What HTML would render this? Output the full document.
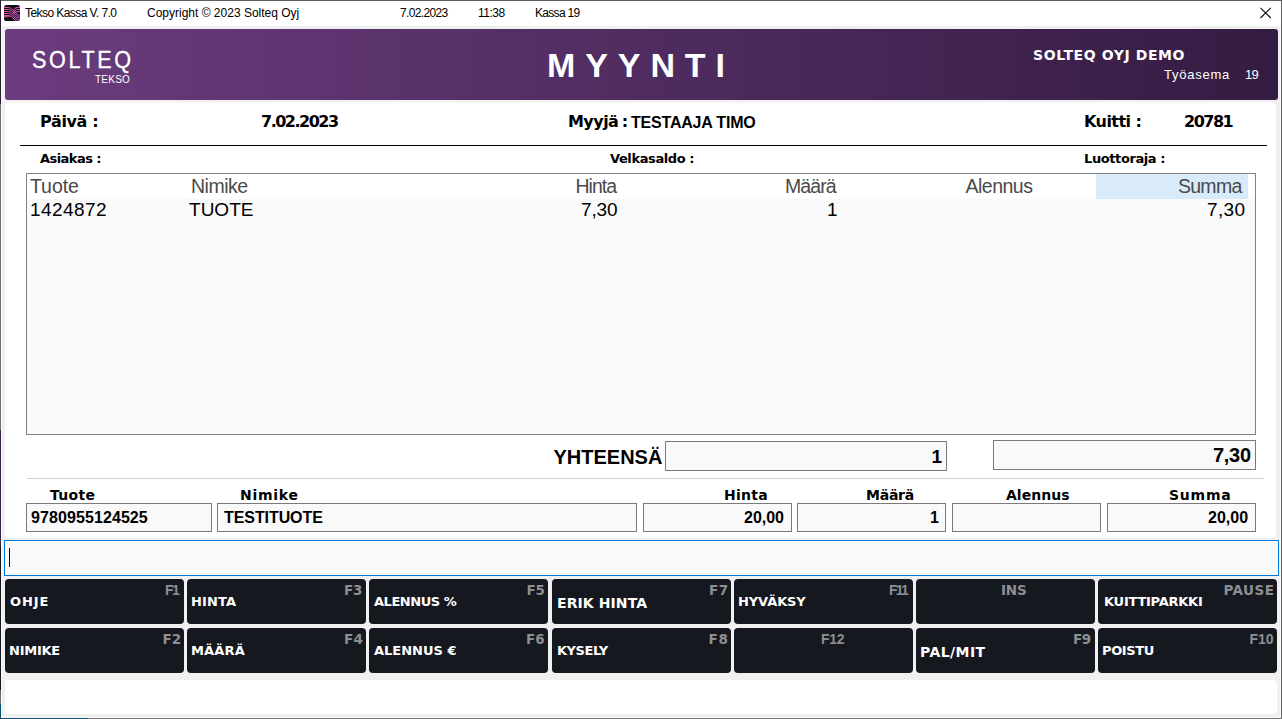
<!DOCTYPE html>
<html lang="fi">
<head>
<meta charset="utf-8">
<title>Tekso Kassa V. 7.0</title>
<style>
html,body{margin:0;padding:0;}
body{width:1282px;height:719px;overflow:hidden;background:#f0f0f0;position:relative;font-family:"Liberation Sans",sans-serif;color:#000;}
.abs,.t{position:absolute;white-space:nowrap;}
.t{line-height:1;}
/* window chrome */
#frame-top{left:0;top:0;width:1282px;height:1px;background:#5f5f5f;}
#frame-right{left:1281px;top:0;width:1px;height:719px;background:#606060;}
#frame-right2{left:1280px;top:26px;width:1px;height:692px;background:#fafafa;}
#frame-left2{left:1px;top:26px;width:1px;height:692px;background:#fafafa;}
#frame-bot{left:0;top:718px;width:1282px;height:1px;background:#747474;}
#frame-bot2{left:1px;top:717px;width:1280px;height:1px;background:#fafafa;}
#frame-botl{left:0;top:718px;width:88px;height:1px;background:#0d4f6e;}
#frame-left{left:0;top:0;width:1px;height:719px;background:linear-gradient(180deg,#2a1c33 0,#2a1c33 104px,#6c6c6c 104px,#6c6c6c 430px,#3a2547 430px,#3a2547 546px,#14141a 546px,#14141a 690px,#6c6c6c 690px,#6c6c6c 704px,#0d4f6e 704px);}
#titlebar{left:1px;top:1px;width:1280px;height:25px;background:#fff;}
.tb{font-size:12px;top:7px;color:#000;}
/* banner */
#banner{left:5px;top:29px;width:1273px;height:71px;border-radius:3px;background:linear-gradient(90deg,#6b3c7e,#341c42);}
.w{color:#fff;}
/* main white panel */
#panel{left:5px;top:103px;width:1271px;height:435px;background:#fff;border-radius:4px;box-shadow:0 -1px 0 rgba(255,255,255,.45);}
.mb{font-family:"DejaVu Sans","Liberation Sans",sans-serif;font-weight:bold;}
.ab{font-family:"Liberation Sans",sans-serif;font-weight:bold;}
#hr1{left:20px;top:145px;width:1247px;height:1px;background:#000;}
#hr2{left:27px;top:478px;width:1237px;height:1px;background:#d0d0d0;}
#grid{left:26px;top:173px;width:1228px;height:260px;border:1px solid #7d8188;background:#f9f9f9;}
#gridhead{left:27px;top:174px;width:1228px;height:25px;background:#fff;}
#sumhl{left:1096px;top:174px;width:152px;height:25px;background:#d9ebf9;}
.gh{font-size:19.5px;color:#4a4a4a;top:178px;}
.gr{font-size:19px;color:#000;top:200px;}
.box{position:absolute;border:1px solid #7a7a7a;background:#f9f9f9;box-sizing:border-box;}
.lbl{font-size:14px;top:488px;letter-spacing:.5px;}
.val{font-size:16px;top:510px;font-weight:bold;}
#entry{left:4px;top:540px;width:1275px;height:36px;box-sizing:border-box;border:1px solid #0078d7;background:#fafafa;}
#caret{left:9px;top:548px;width:1px;height:19px;background:#000;}
.btn{position:absolute;width:179px;height:45px;border-radius:4px;background:#16181f;}
.bl{font-size:13px;color:#fff;}
.fk{font-family:"DejaVu Sans","Liberation Sans",sans-serif;font-weight:bold;font-size:13.5px;color:#8c8e93;}
#bottom{left:5px;top:680px;width:1272px;height:34px;background:#fff;border-radius:4px;}
</style>
</head>
<body>
<div class="abs" id="titlebar"></div>
<div class="abs" id="frame-top"></div>
<div class="abs" id="frame-left"></div>
<div class="abs" id="frame-left2"></div>
<div class="abs" id="frame-right2"></div>
<div class="abs" id="frame-right"></div>
<div class="abs" id="frame-bot2"></div>
<div class="abs" id="frame-bot"></div>
<div class="abs" id="frame-botl"></div>
<svg class="abs" id="appicon" style="left:4px;top:5px" width="16" height="16" viewBox="0 0 16 16"><defs><linearGradient id="ig" x1="0" y1="0" x2="1" y2="0"><stop offset="0" stop-color="#f0509f"/><stop offset=".5" stop-color="#e860cc"/><stop offset="1" stop-color="#d868f8"/></linearGradient><clipPath id="ic"><rect x="0" y="0" width="16" height="16" rx="2.6"/></clipPath></defs><g clip-path="url(#ic)"><rect width="16" height="16" fill="#0e1014"/><path d="M0 10.5H4.4Q6 10.6 7 11.6Q4 12.6 0 12.4Z" fill="#e4509c" opacity=".8"/><g fill="none" stroke="url(#ig)" stroke-width=".9"><path d="M0 2.50H4.4Q6 2.50 7.4 3.70L17 12.10"/><path d="M0 4.50H4.4Q6 4.50 7.4 5.70L17 14.10"/><path d="M0 6.50H4.4Q6 6.50 7.4 7.70L17 16.10"/><path d="M0 8.50H4.4Q6 8.50 7.4 9.70L17 18.10"/><path d="M0 10.50H4.4Q6 10.50 7.4 11.70L17 20.10"/><path d="M16 2.50H13.6Q12 2.50 10.8 3.40L9.6 4.40"/><path d="M16 4.50H13.6Q12 4.50 10.8 5.40L9.6 6.40"/><path d="M16 6.50H13.6Q12 6.50 10.8 7.40L9.6 8.40"/></g></g></svg>
<div id="t1" class="t tb" style="left:25px;letter-spacing:-.57px">Tekso Kassa V. 7.0</div>
<div id="t2" class="t tb" style="left:147px">Copyright © 2023 Solteq Oyj</div>
<div id="t3" class="t tb" style="left:400px;letter-spacing:-.65px">7.02.2023</div>
<div id="t4" class="t tb" style="left:478px;letter-spacing:-.5px">11:38</div>
<div id="t5" class="t tb" style="left:535px;letter-spacing:-.7px">Kassa 19</div>

<svg class="abs" id="closex" style="left:1260px;top:7px" width="12" height="12" viewBox="0 0 12 12"><path d="M0.5 0.8L10.8 11M10.8 0.8L0.5 11" stroke="#111" stroke-width="1.1" fill="none"/></svg>
<div class="abs" id="banner"></div>
<div id="t6" class="t w" style="left:32px;top:48px;font-size:24px;letter-spacing:2.9px;transform:scaleX(.9);transform-origin:0 0;-webkit-text-stroke:.35px #fff">SOLTEQ</div>
<div id="t7" class="t w" style="left:95px;top:74.5px;font-size:10px;letter-spacing:0.25px">TEKSO</div>
<div id="t8" class="t w ab" style="left:547px;top:48px;font-size:34px;letter-spacing:9.9px">MYYNTI</div>
<div id="t9" class="t w mb" style="left:1033px;top:48px;font-size:14px;letter-spacing:.6px">SOLTEQ OYJ DEMO</div>
<div id="t10" class="t w" style="left:1164px;top:68px;font-size:13px;letter-spacing:.75px">Työasema</div>
<div id="t11" class="t w" style="left:1245px;top:68px;font-size:13px;letter-spacing:-0.8px">19</div>

<div class="abs" id="democaret" style="left:1189px;top:50px;width:1px;height:10px;background:#3f2468"></div>
<div class="abs" id="panel"></div>
<div id="t12" class="t mb" style="left:40px;top:114px;font-size:16px;letter-spacing:-.35px">Päivä :</div>
<div id="t13" class="t mb" style="left:261px;top:114px;font-size:16px;letter-spacing:-1.5px">7.02.2023</div>
<div id="t14" class="t mb" style="left:568px;top:114px;font-size:16px;letter-spacing:-.55px;word-spacing:-1.5px">Myyjä :</div>
<div id="t15" class="t ab" style="left:631px;top:115px;font-size:16px;letter-spacing:-.2px">TESTAAJA TIMO</div>
<div id="t16" class="t mb" style="left:1084px;top:114px;font-size:16px;letter-spacing:-.55px">Kuitti :</div>
<div id="t17" class="t mb" style="left:1184px;top:114px;font-size:16px;letter-spacing:-1.5px">20781</div>
<div class="abs" id="hr1"></div>
<div id="t18" class="t mb" style="left:40px;top:152px;font-size:13px;letter-spacing:-.55px">Asiakas :</div>
<div id="t19" class="t mb" style="left:610px;top:152px;font-size:13px;letter-spacing:-.4px">Velkasaldo :</div>
<div id="t20" class="t mb" style="left:1084px;top:152px;font-size:13px;letter-spacing:-.4px">Luottoraja :</div>

<div class="abs" id="grid"></div>
<div class="abs" id="gridhead"></div>
<div class="abs" id="sumhl"></div>
<div id="t21" class="t gh" style="left:30px;top:177px;letter-spacing:-0.07px">Tuote</div>
<div id="t22" class="t gh" style="left:191px;top:177px;letter-spacing:-0.48px">Nimike</div>
<div id="t23" class="t gh" style="left:575.5px;top:177px;letter-spacing:-1px">Hinta</div>
<div id="t24" class="t gh" style="left:785px;top:177px;letter-spacing:-0.92px">Määrä</div>
<div id="t25" class="t gh" style="left:965.5px;top:177px;letter-spacing:-0.5px">Alennus</div>
<div id="t26" class="t gh" style="left:1178px;top:177px;letter-spacing:-0.74px">Summa</div>
<div id="t27" class="t gr" style="left:30px;letter-spacing:0.44px;top:200px">1424872</div>
<div id="t28" class="t gr" style="left:189px;top:200px;letter-spacing:0.02px">TUOTE</div>
<div id="t29" class="t gr" style="left:581px;top:200px;letter-spacing:-0.13px">7,30</div>
<div id="t30" class="t gr" style="left:827px;top:200px">1</div>
<div id="t31" class="t gr" style="left:1207px;top:200px;letter-spacing:0.33px">7,30</div>

<div id="t32" class="t ab" style="left:553.5px;top:447px;font-size:20px">YHTEENSÄ</div>
<div class="box" style="left:665px;top:441px;width:282px;height:30px"></div>
<div class="box" style="left:993px;top:440px;width:263px;height:30px"></div>
<div id="t33" class="t ab" style="right:340px;top:447px;font-size:19px">1</div>
<div id="t34" class="t ab" style="top:445px;font-size:20px;letter-spacing:-0.3px;left:1213px">7,30</div>
<div class="abs" id="hr2"></div>

<div id="t35" class="t mb lbl" style="left:50px;top:488px;letter-spacing:0.3px">Tuote</div>
<div id="t36" class="t mb lbl" style="left:240px;top:488px;letter-spacing:0.74px">Nimike</div>
<div id="t37" class="t mb lbl" style="left:724px;top:488px;letter-spacing:0.25px">Hinta</div>
<div id="t38" class="t mb lbl" style="left:866px;top:488px;letter-spacing:-0.25px">Määrä</div>
<div id="t39" class="t mb lbl" style="left:1006px;top:488px;letter-spacing:0.03px">Alennus</div>
<div id="t40" class="t mb lbl" style="left:1169px;top:488px;letter-spacing:0.78px">Summa</div>
<div class="box" style="left:26px;top:503px;width:186px;height:29px"></div>
<div class="box" style="left:217px;top:503px;width:420px;height:29px"></div>
<div class="box" style="left:643px;top:503px;width:149px;height:29px"></div>
<div class="box" style="left:797px;top:503px;width:149px;height:29px"></div>
<div class="box" style="left:952px;top:503px;width:149px;height:29px"></div>
<div class="box" style="left:1107px;top:503px;width:149px;height:29px"></div>
<div id="t41" class="t val" style="left:31px;top:510px;letter-spacing:0.09px">9780955124525</div>
<div id="t42" class="t val" style="left:224px;top:510px;letter-spacing:-0.08px">TESTITUOTE</div>
<div id="t43" class="t val" style="left:744px;top:510px;letter-spacing:-0.01px">20,00</div>
<div id="t44" class="t val" style="left:930px;top:510px">1</div>
<div id="t45" class="t val" style="left:1208px;top:510px">20,00</div>

<div class="abs" id="entry"></div>
<div class="abs" id="caret"></div>

<div class="btn" style="left:5px;top:579px"></div>
<div class="btn" style="left:187px;top:579px"></div>
<div class="btn" style="left:369px;top:579px"></div>
<div class="btn" style="left:552px;top:579px"></div>
<div class="btn" style="left:734px;top:579px"></div>
<div class="btn" style="left:916px;top:579px"></div>
<div class="btn" style="left:1098px;top:579px"></div>
<div class="btn" style="left:5px;top:628px"></div>
<div class="btn" style="left:187px;top:628px"></div>
<div class="btn" style="left:369px;top:628px"></div>
<div class="btn" style="left:552px;top:628px"></div>
<div class="btn" style="left:734px;top:628px"></div>
<div class="btn" style="left:916px;top:628px"></div>
<div class="btn" style="left:1098px;top:628px"></div>

<div id="t46" class="t mb bl" style="left:10px;top:595px;letter-spacing:0.93px">OHJE</div>
<div id="t47" class="t mb bl" style="left:191px;top:595px;letter-spacing:0.15px">HINTA</div>
<div id="t48" class="t mb bl" style="left:374px;top:595px;letter-spacing:-0.46px">ALENNUS %</div>
<div id="t49" class="t mb bl" style="left:557px;top:596px;font-size:14px;letter-spacing:0.09px">ERIK HINTA</div>
<div id="t50" class="t mb bl" style="left:738px;top:595px;letter-spacing:-0.1px">HYVÄKSY</div>
<div id="t51" class="t mb bl" style="left:1104px;top:595px;letter-spacing:-0.25px">KUITTIPARKKI</div>
<div id="t52" class="t mb bl" style="left:9px;top:644px;letter-spacing:-0.24px">NIMIKE</div>
<div id="t53" class="t mb bl" style="left:191px;top:644px;letter-spacing:0.18px">MÄÄRÄ</div>
<div id="t54" class="t mb bl" style="left:374px;top:644px">ALENNUS €</div>
<div id="t55" class="t mb bl" style="left:557px;top:644px;letter-spacing:-0.46px">KYSELY</div>
<div id="t56" class="t mb bl" style="left:920px;top:645px;font-size:14px;letter-spacing:0.43px">PAL/MIT</div>
<div id="t57" class="t mb bl" style="left:1102px;top:644px;letter-spacing:-0.36px">POISTU</div>

<div id="t58" class="t fk" style="top:583px;left:165px;font-family:'Liberation Sans',sans-serif;font-size:14px;letter-spacing:-1.6px">F1</div>
<div id="t59" class="t fk" style="top:584px;left:344px;letter-spacing:-0.2px">F3</div>
<div id="t60" class="t fk" style="top:584px;left:526.5px;letter-spacing:-0.2px">F5</div>
<div id="t61" class="t fk" style="top:584px;left:709px;letter-spacing:0.6px">F7</div>
<div id="t62" class="t fk" style="top:583px;left:889px;font-family:'Liberation Sans',sans-serif;font-size:14px;letter-spacing:-1.78px">F11</div>
<div id="t63" class="t fk" style="left:1001px;top:584px;letter-spacing:-0.2px">INS</div>
<div id="t64" class="t fk" style="top:584px;left:1223.5px;letter-spacing:0.46px">PAUSE</div>
<div id="t65" class="t fk" style="top:633px;left:162.5px">F2</div>
<div id="t66" class="t fk" style="top:633px;left:344px;letter-spacing:0.4px">F4</div>
<div id="t67" class="t fk" style="top:633px;left:526px">F6</div>
<div id="t68" class="t fk" style="top:633px;left:708.5px;letter-spacing:0.8px">F8</div>
<div id="t69" class="t fk" style="left:821px;top:632px;font-family:'Liberation Sans',sans-serif;font-size:14px;letter-spacing:-0.28px">F12</div>
<div id="t70" class="t fk" style="top:633px;left:1073px;letter-spacing:-0.4px">F9</div>
<div id="t71" class="t fk" style="top:632px;left:1249.5px;font-family:'Liberation Sans',sans-serif;font-size:14px">F10</div>

<div class="abs" id="bottom"></div>
</body>
</html>
